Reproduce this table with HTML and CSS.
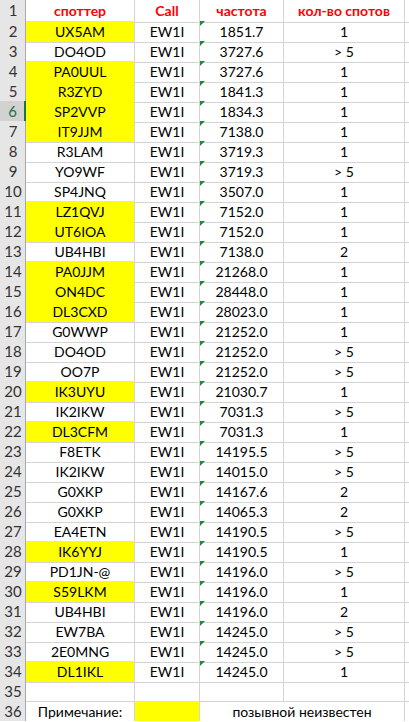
FILE: index.html
```html
<!DOCTYPE html>
<html>
<head>
<meta charset="utf-8">
<link rel="stylesheet" href="styles.css">
</head>
<body>
<div class="sheet">
  <div class="row head"><div class="rh">1</div><div class="c b hd">споттер</div><div class="c hd">Call</div><div class="c hd">частота</div><div class="c hd">кол-во спотов</div><div class="c f"></div></div>
  <div class="row"><div class="rh">2</div><div class="c b y">UX5AM</div><div class="c">EW1I</div><div class="c d">1851.7</div><div class="c">1</div><div class="c f"></div></div>
  <div class="row"><div class="rh">3</div><div class="c b">DO4OD</div><div class="c">EW1I</div><div class="c d">3727.6</div><div class="c">&gt; 5</div><div class="c f"></div></div>
  <div class="row"><div class="rh">4</div><div class="c b y">PA0UUL</div><div class="c">EW1I</div><div class="c d">3727.6</div><div class="c">1</div><div class="c f"></div></div>
  <div class="row"><div class="rh">5</div><div class="c b y">R3ZYD</div><div class="c">EW1I</div><div class="c d">1841.3</div><div class="c">1</div><div class="c f"></div></div>
  <div class="row"><div class="rh sel">6</div><div class="c b y">SP2VVP</div><div class="c">EW1I</div><div class="c d">1834.3</div><div class="c">1</div><div class="c f"></div></div>
  <div class="row"><div class="rh">7</div><div class="c b y">IT9JJM</div><div class="c">EW1I</div><div class="c d">7138.0</div><div class="c">1</div><div class="c f"></div></div>
  <div class="row"><div class="rh">8</div><div class="c b">R3LAM</div><div class="c">EW1I</div><div class="c d">3719.3</div><div class="c">1</div><div class="c f"></div></div>
  <div class="row"><div class="rh">9</div><div class="c b">YO9WF</div><div class="c">EW1I</div><div class="c d">3719.3</div><div class="c">&gt; 5</div><div class="c f"></div></div>
  <div class="row"><div class="rh">10</div><div class="c b">SP4JNQ</div><div class="c">EW1I</div><div class="c d">3507.0</div><div class="c">1</div><div class="c f"></div></div>
  <div class="row"><div class="rh">11</div><div class="c b y">LZ1QVJ</div><div class="c">EW1I</div><div class="c d">7152.0</div><div class="c">1</div><div class="c f"></div></div>
  <div class="row"><div class="rh">12</div><div class="c b y">UT6IOA</div><div class="c">EW1I</div><div class="c d">7152.0</div><div class="c">1</div><div class="c f"></div></div>
  <div class="row"><div class="rh">13</div><div class="c b">UB4HBI</div><div class="c">EW1I</div><div class="c d">7138.0</div><div class="c">2</div><div class="c f"></div></div>
  <div class="row"><div class="rh">14</div><div class="c b y">PA0JJM</div><div class="c">EW1I</div><div class="c d">21268.0</div><div class="c">1</div><div class="c f"></div></div>
  <div class="row"><div class="rh">15</div><div class="c b y">ON4DC</div><div class="c">EW1I</div><div class="c d">28448.0</div><div class="c">1</div><div class="c f"></div></div>
  <div class="row"><div class="rh">16</div><div class="c b y">DL3CXD</div><div class="c">EW1I</div><div class="c d">28023.0</div><div class="c">1</div><div class="c f"></div></div>
  <div class="row"><div class="rh">17</div><div class="c b">G0WWP</div><div class="c">EW1I</div><div class="c d">21252.0</div><div class="c">1</div><div class="c f"></div></div>
  <div class="row"><div class="rh">18</div><div class="c b">DO4OD</div><div class="c">EW1I</div><div class="c d">21252.0</div><div class="c">&gt; 5</div><div class="c f"></div></div>
  <div class="row"><div class="rh">19</div><div class="c b">OO7P</div><div class="c">EW1I</div><div class="c d">21252.0</div><div class="c">&gt; 5</div><div class="c f"></div></div>
  <div class="row"><div class="rh">20</div><div class="c b y">IK3UYU</div><div class="c">EW1I</div><div class="c d">21030.7</div><div class="c">1</div><div class="c f"></div></div>
  <div class="row"><div class="rh">21</div><div class="c b">IK2IKW</div><div class="c">EW1I</div><div class="c d">7031.3</div><div class="c">&gt; 5</div><div class="c f"></div></div>
  <div class="row"><div class="rh">22</div><div class="c b y">DL3CFM</div><div class="c">EW1I</div><div class="c d">7031.3</div><div class="c">1</div><div class="c f"></div></div>
  <div class="row"><div class="rh">23</div><div class="c b">F8ETK</div><div class="c">EW1I</div><div class="c d">14195.5</div><div class="c">&gt; 5</div><div class="c f"></div></div>
  <div class="row"><div class="rh">24</div><div class="c b">IK2IKW</div><div class="c">EW1I</div><div class="c d">14015.0</div><div class="c">&gt; 5</div><div class="c f"></div></div>
  <div class="row"><div class="rh">25</div><div class="c b">G0XKP</div><div class="c">EW1I</div><div class="c d">14167.6</div><div class="c">2</div><div class="c f"></div></div>
  <div class="row"><div class="rh">26</div><div class="c b">G0XKP</div><div class="c">EW1I</div><div class="c d">14065.3</div><div class="c">2</div><div class="c f"></div></div>
  <div class="row"><div class="rh">27</div><div class="c b">EA4ETN</div><div class="c">EW1I</div><div class="c d">14190.5</div><div class="c">&gt; 5</div><div class="c f"></div></div>
  <div class="row"><div class="rh">28</div><div class="c b y">IK6YYJ</div><div class="c">EW1I</div><div class="c d">14190.5</div><div class="c">1</div><div class="c f"></div></div>
  <div class="row"><div class="rh">29</div><div class="c b">PD1JN-@</div><div class="c">EW1I</div><div class="c d">14196.0</div><div class="c">&gt; 5</div><div class="c f"></div></div>
  <div class="row"><div class="rh">30</div><div class="c b y">S59LKM</div><div class="c">EW1I</div><div class="c d">14196.0</div><div class="c">1</div><div class="c f"></div></div>
  <div class="row"><div class="rh">31</div><div class="c b">UB4HBI</div><div class="c">EW1I</div><div class="c d">14196.0</div><div class="c">2</div><div class="c f"></div></div>
  <div class="row"><div class="rh">32</div><div class="c b">EW7BA</div><div class="c">EW1I</div><div class="c d">14245.0</div><div class="c">&gt; 5</div><div class="c f"></div></div>
  <div class="row"><div class="rh">33</div><div class="c b">2E0MNG</div><div class="c">EW1I</div><div class="c d">14245.0</div><div class="c">&gt; 5</div><div class="c f"></div></div>
  <div class="row"><div class="rh">34</div><div class="c b y">DL1IKL</div><div class="c">EW1I</div><div class="c d">14245.0</div><div class="c">1</div><div class="c f"></div></div>
  <div class="row"><div class="rh">35</div><div class="c b"></div><div class="c"></div><div class="c"></div><div class="c"></div><div class="c f"></div></div>
  <div class="row"><div class="rh">36</div><div class="c b">Примечание:</div><div class="c y"></div><div class="c m">позывной неизвестен</div><div class="c f"></div></div>
</div>
</body>
</html>
```

FILE: styles.css
```css
html, body {
  margin: 0;
  padding: 0;
  background: #ffffff;
}
body {
  font-family: "Lato", "Liberation Sans", sans-serif;
  font-size: 14px;
  color: #000;
  overflow: hidden;
}
.sheet {
  width: 409px;
}
.row {
  display: grid;
  grid-template-columns: 26px 109px 65px 84px 121px 1fr;
  height: 20px;
}
.row.head {
  height: 21px;
}
.rh {
  box-sizing: border-box;
  background: #e6e6e6;
  border-right: 1px solid #a9a9a9;
  border-bottom: 1px solid #bfbfbf;
  color: #333;
  font-size: 15px;
  text-align: center;
  line-height: 20px;
  padding-left: 1px;
}
.rh.sel {
  background: #d2d2d2;
  color: #217346;
  border-right: 2px solid #217346;
}
.c {
  box-sizing: border-box;
  border-right: 1px solid #d4d4d4;
  border-bottom: 1px solid #d4d4d4;
  text-align: center;
  line-height: 21px;
  white-space: nowrap;
  position: relative;
}
.head .c {
  line-height: 22px;
}
.hd {
  color: #ff0000;
  font-weight: 700;
}
.y {
  background: #ffff00;
}
.d::before {
  content: "";
  position: absolute;
  left: 0;
  top: 0;
  border-top: 5px solid #1e8a3a;
  border-right: 5px solid transparent;
}
.m {
  grid-column: 4 / 6;
}
.f {
  border-right: none;
}
```
